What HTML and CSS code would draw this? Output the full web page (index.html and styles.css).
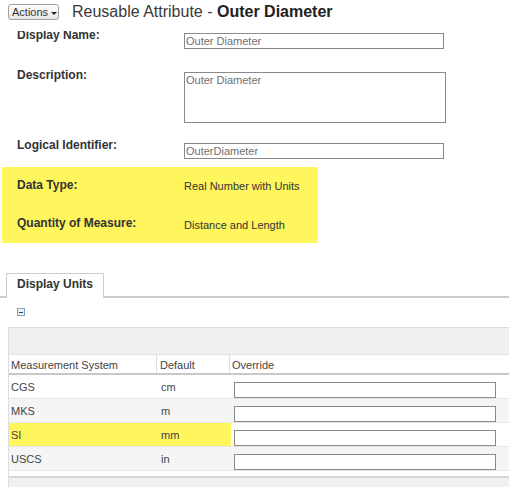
FILE: index.html
```html
<!DOCTYPE html>
<html>
<head>
<meta charset="utf-8">
<link rel="stylesheet" href="styles.css">
</head>
<body>
<div class="header">
  <button class="actions">Actions<span class="caret"></span></button>
  <h1 class="title">Reusable Attribute - <b>Outer Diameter</b></h1>
</div>
<div class="body">
  <div class="inner">
    <div class="field-row r1">
      <div class="label">Display Name:</div>
      <input class="text-input" type="text" value="Outer Diameter">
    </div>
    <div class="field-row r2">
      <div class="label">Description:</div>
      <textarea class="text-area">Outer Diameter</textarea>
    </div>
    <div class="field-row r3">
      <div class="label">Logical Identifier:</div>
      <input class="text-input" type="text" value="OuterDiameter">
    </div>
    <div class="highlight">
      <div class="field-row dt">
        <div class="label">Data Type:</div>
        <div class="value">Real Number with Units</div>
      </div>
      <div class="field-row qm">
        <div class="label">Quantity of Measure:</div>
        <div class="value">Distance and Length</div>
      </div>
    </div>
    <div class="tabs">
      <div class="tab">Display Units</div>
    </div>
    <div class="toggle"><span class="minus"></span></div>
    <div class="grid">
      <div class="grid-band"></div>
      <div class="grid-head">
        <div class="hcell">Measurement System</div>
        <div class="hcell">Default</div>
        <div class="hcell">Override</div>
      </div>
      <div class="grid-row">
        <div class="cell">CGS</div>
        <div class="cell">cm</div>
        <div class="cell"><input class="ovr" type="text"></div>
      </div>
      <div class="grid-row alt">
        <div class="cell">MKS</div>
        <div class="cell">m</div>
        <div class="cell"><input class="ovr" type="text"></div>
      </div>
      <div class="grid-row">
        <div class="cell hl">SI</div>
        <div class="cell hl">mm</div>
        <div class="cell"><input class="ovr" type="text"></div>
      </div>
      <div class="grid-row alt">
        <div class="cell">USCS</div>
        <div class="cell">in</div>
        <div class="cell"><input class="ovr" type="text"></div>
      </div>
      <div class="grid-foot"></div>
    </div>
  </div>
</div>
</body>
</html>
```
FILE: styles.css
```css
html, body {
  margin: 0;
  padding: 0;
  overflow: hidden;
  background: #ffffff;
}
body {
  font-family: "Liberation Sans", Arial, sans-serif;
  color: #333333;
  width: 509px;
  height: 487px;
}
.header {
  height: 31px;
  box-sizing: border-box;
  padding: 4px 0 0 8px;
  display: flex;
  align-items: flex-start;
  background: #ffffff;
}
.actions {
  width: 51px;
  height: 16px;
  box-sizing: border-box;
  margin: 0;
  padding: 0 0 0 3px;
  border: 1px solid #a0a0a0;
  border-radius: 3px;
  background: linear-gradient(#ffffff, #e6e6e6);
  font-family: "Liberation Sans", Arial, sans-serif;
  font-size: 11px;
  line-height: 13px;
  color: #333333;
  display: flex;
  align-items: center;
  text-align: left;
}
.caret {
  display: inline-block;
  width: 0;
  height: 0;
  margin-left: 3px;
  margin-top: 2px;
  border-left: 3px solid transparent;
  border-right: 3px solid transparent;
  border-top: 3px solid #222222;
}
.title {
  margin: -1px 0 0 13px;
  font-size: 16px;
  line-height: 18px;
  font-weight: normal;
  color: #3a3a3a;
  white-space: nowrap;
}
.title b {
  color: #222222;
  font-weight: bold;
}
.body {
  overflow: hidden;
  height: 456px;
}
.inner {
  margin-top: -3px;
}
.field-row {
  display: flex;
  align-items: flex-start;
  padding-left: 17px;
  box-sizing: border-box;
}
.label {
  width: 167px;
  flex: none;
  font-size: 12px;
  line-height: 14px;
  font-weight: bold;
  color: #333333;
}
.r1 { height: 40px; }
.r2 { height: 70px; }
.r3 { height: 29px; }
.text-input {
  width: 260px;
  height: 16px;
  box-sizing: border-box;
  margin: 5px 0 0 0;
  padding: 0 0 0 1px;
  border: 1px solid #8a8a8a;
  font-family: "Liberation Sans", Arial, sans-serif;
  font-size: 11px;
  color: #707070;
  background: #ffffff;
}
.text-area {
  width: 262px;
  height: 51px;
  box-sizing: border-box;
  margin: 4px 0 0 0;
  padding: 1px 1px;
  border: 1px solid #8a8a8a;
  font-family: "Liberation Sans", Arial, sans-serif;
  font-size: 11px;
  line-height: 13px;
  color: #707070;
  resize: none;
  overflow: hidden;
}
.highlight {
  margin-left: 2px;
  width: 316px;
  height: 76px;
  box-sizing: border-box;
  padding-top: 11px;
  background: #fff55c;
}
.highlight .field-row {
  padding-left: 15px;
}
.dt { height: 38px; }
.qm { height: 27px; }
.value {
  font-size: 11px;
  line-height: 13px;
  color: #333333;
  white-space: nowrap;
}
.dt .value { margin-top: 2px; }
.qm .value { margin-top: 3px; }
.tabs {
  margin-top: 30px;
  display: flex;
  padding-left: 6px;
  height: 23px;
  border-bottom: 2px solid #cccccc;
}
.tab {
  height: 25px;
  box-sizing: border-box;
  padding: 3px 10px 0 10px;
  border: 1px solid #cccccc;
  border-bottom: none;
  background: #ffffff;
  font-size: 12px;
  line-height: 14px;
  font-weight: bold;
  color: #333333;
  margin-bottom: -2px;
}
.toggle {
  margin: 10px 0 0 17px;
  width: 8px;
  height: 8px;
  box-sizing: border-box;
  border: 1px solid #7f9fc6;
  background: #eef3fa;
  display: flex;
  align-items: center;
  justify-content: center;
}
.minus {
  width: 4px;
  height: 1px;
  background: #2b3a55;
}
.grid {
  margin: 11px 0 0 8px;
  width: 520px;
  border-left: 1px solid #dddddd;
}
.grid-band {
  height: 27px;
  box-sizing: border-box;
  border-top: 1px solid #dddddd;
  background: #f0f0f0;
}
.grid-head {
  display: grid;
  grid-template-columns: 148px 73px 1fr;
  height: 18px;
  border-bottom: 2px solid #c8c8c8;
  border-top: 1px solid #e2e2e2;
}
.hcell {
  font-size: 11px;
  line-height: 13px;
  padding: 4px 0 0 2px;
  color: #444444;
  border-right: 1px solid #dddddd;
}
.hcell + .hcell {
  padding-left: 3px;
}
.hcell:last-child {
  border-right: none;
  padding-left: 2px;
}
.grid-row {
  display: grid;
  grid-template-columns: 149px 73px 1fr;
  height: 24px;
  box-sizing: border-box;
  border-bottom: 1px solid #e6e6e6;
  background: #ffffff;
}
.grid-row.alt {
  background: #f5f5f5;
}
.cell {
  font-size: 11px;
  line-height: 13px;
  padding: 6px 0 0 2px;
  color: #444444;
}
.cell:nth-child(2) {
  padding-left: 3px;
}
.cell.hl {
  background: #fff55c;
}
.cell:last-child {
  padding: 7px 0 0 3px;
}
.ovr {
  display: block;
  width: 262px;
  height: 16px;
  box-sizing: border-box;
  margin: 0;
  padding: 0 2px;
  border: 1px solid #8a8a8a;
  background: #ffffff;
  font-family: "Liberation Sans", Arial, sans-serif;
  font-size: 11px;
}
.grid-foot {
  margin-top: 5px;
  height: 20px;
  border-top: 2px solid #d6d6d6;
  background: #f0f0f0;
}
```
